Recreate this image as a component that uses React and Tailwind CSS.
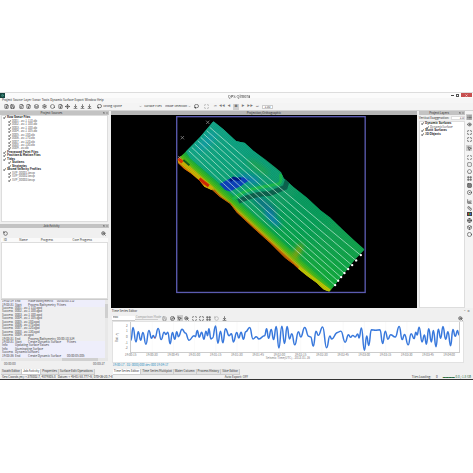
import {
  ArrowDownToLine, Box, ChartArea, Circle, CircleDot, Compass, Eye, FileDown, FileInput, FilePlus,
  Frame, Globe, Grid3x3, Hexagon, Layers, Lasso, List, Maximize, MousePointer2, Move,
  Pentagon, RotateCcw, Ruler, Save, Scan, Settings, Square, SquareDashed, ChevronDown, X, ZoomIn,
} from "lucide-react";

const menus = ["Project", "Source", "Layer", "Sonar", "Tools", "Dynamic Surface", "Export", "Window", "Help"];

const sources = [
  { name: "Raw Sonar Files", bold: true },
  { name: "0001 - av-1 110.db" },
  { name: "0002 - av-1 100.db" },
  { name: "0003 - av-1 100.db" },
  { name: "0004 - av-1 105.db" },
  { name: "0005 - av-180.db" },
  { name: "0006 - av-170.db" },
  { name: "0007 - av-120.db" },
  { name: "0008 - av-130.db" },
  { name: "0009 - av.db" },
  { name: "Processed Point Files", bold: true },
  { name: "Position & Motion Files", bold: true },
  { name: "Tides", bold: true },
  { name: "Stations", bold: true, sub: true },
  { name: "Strategies", bold: true, sub: true },
  { name: "Sound Velocity Profiles", bold: true },
  { name: "SVP_00001.bsvp" },
  { name: "SVP_00002.bsvp" },
  { name: "SVP_00003.bsvp" },
];

const log = [
  ["19:02:19", "End", "Make Bathymetric", "00:00:00.112", true],
  ["19:03:31", "Start", "Process Bathymetry", "9 lines", true],
  ["Success", "0001 - av-1 110.qpd"],
  ["Success", "0002 - av-1 100.qpd"],
  ["Success", "0003 - av-1 100.qpd"],
  ["Success", "0004 - av-1 105.qpd"],
  ["Success", "0005 - av-180.qpd"],
  ["Success", "0006 - av-170.qpd"],
  ["Success", "0007 - av-120.qpd"],
  ["Success", "0008 - av-130.qpd"],
  ["Success", "0009 - av.qpd"],
  ["19:03:31", "End", "Process Bathymetry", "00:00:10.524"],
  ["19:03:31", "Start", "Create Dynamic Surface", "9 lines", true],
  ["Info", "Updating Surface Values", "", "", true],
  ["Info", "Illuminating Surface", "", "", true],
  ["Success", "DynamicSurface1", "", "", true],
  ["19:03:36", "End", "Create Dynamic Surface", "00:00:05.005", true],
];

// turning points of the heave signal
const signal = [
  [72, 108], [78, 69], [87, 113], [94, 82], [101, 108], [108, 84], [117, 120], [126, 78], [134, 102], [139, 93],
  [144, 101], [154, 72], [163, 106], [172, 83], [177, 90], [183, 83], [190, 119], [197, 84], [204, 105],
  [210, 82], [215, 97], [226, 74], [236, 86], [247, 108], [262, 94], [266, 97], [272, 78], [278, 99],
  [285, 83], [292, 105], [298, 80], [303, 94], [307, 73], [313, 104], [318, 101], [327, 64], [334, 117],
  [342, 80], [349, 116], [357, 73], [368, 94], [375, 88], [381, 113], [391, 84], [397, 101], [404, 83],
  [411, 105], [418, 82], [430, 69], [440, 104], [450, 97], [458, 104], [475, 94], [481, 73], [487, 102],
  [495, 75], [502, 106], [510, 66], [518, 132], [527, 65], [535, 118], [543, 66], [550, 104], [557, 88],
  [566, 122], [577, 82], [584, 98], [596, 69], [608, 96], [614, 98], [622, 126], [630, 80], [637, 93],
  [650, 67], [662, 131], [672, 95], [677, 104], [695, 84], [705, 80], [718, 114], [728, 91], [734, 99],
  [741, 93], [748, 98], [756, 89], [760, 101], [767, 70], [776, 139], [783, 95], [789, 124], [797, 76],
  [810, 77], [823, 76], [831, 118], [839, 80], [847, 105], [855, 91], [869, 98], [881, 66], [890, 106],
  [897, 90], [908, 122], [917, 88], [926, 103], [931, 83], [935, 92], [941, 68], [950, 113], [957, 92],
  [963, 120], [970, 73], [978, 113], [984, 78], [992, 128], [999, 74], [1006, 102], [1013, 66],
  [1021, 105], [1028, 82], [1036, 125], [1043, 75], [1050, 96], [1057, 78], [1061, 92],
];

const signalPath = signal
  .map(([x, y], i) => {
    if (i === 0) return `M${x} ${y}`;
    const [px, py] = signal[i - 1];
    const mid = (px + x) / 2;
    return `C${mid} ${py} ${mid} ${y} ${x} ${y}`;
  })
  .join(" ");

const hours = ["19:00:15", "19:00:30", "19:00:45", "19:01:00", "19:01:15", "19:01:30", "19:01:45", "19:02:00",
  "19:02:15", "19:02:30", "19:02:45", "19:03:00", "19:03:15", "19:03:30", "19:03:45", "19:04:00"];

const trackEnds = [[571, 435], [557, 451], [545, 465], [533, 477], [522, 489], [512, 501], [503, 512], [494, 525]];

function DockTitle({ children }) {
  return (
    <div className="flex h-1 shrink-0 items-center bg-[#c3c3c3] pr-px">
      <h2 className="flex-1 text-center text-[#333]">{children}</h2>
      <button type="button" aria-label="Float" className="mr-px"><Square size={2} strokeWidth={3} /></button>
      <button type="button" aria-label="Close"><X size={2} strokeWidth={3} /></button>
    </div>
  );
}

function Tick({ label, bold, className = "" }) {
  return (
    <label className={`relative flex min-h-0 flex-1 items-center gap-px whitespace-nowrap ${bold ? "font-bold text-[#222]" : "text-[#555]"} ${className}`}>
      <input type="checkbox" defaultChecked className="sr-only" />
      <svg viewBox="0 0 8 8" className="size-[3px] shrink-0" fill="none" stroke="#111" strokeWidth="1.8">
        <path d="M1 4l2 3 4-6" />
      </svg>
      {label}
    </label>
  );
}

function Tool({ icon: Icon, label, active, className = "" }) {
  return (
    <button
      type="button"
      aria-label={label}
      className={`flex size-[6px] shrink-0 items-center justify-center text-[#444] ${active ? "bg-[#ccc]" : ""} ${className}`}
    >
      <Icon size={5} strokeWidth={3} />
    </button>
  );
}

function Tabs({ items, active }) {
  return (
    <div role="tablist" className="flex h-[6px] shrink-0 pl-px">
      {items.map((name) => (
        <button
          key={name}
          type="button"
          role="tab"
          aria-selected={name === active}
          className={`flex items-center border-r border-b border-[#ccc] px-px whitespace-nowrap ${name === active ? "bg-white" : "bg-[#e4e4e4]"}`}
        >
          {name}
        </button>
      ))}
    </div>
  );
}

function Bathymetry() {
  return (
    <svg viewBox="-177 15 918 579" className="block w-full" role="img" aria-label="Bathymetric surface">
      <defs>
        <linearGradient id="depth" gradientUnits="userSpaceOnUse" x1="240" y1="345" x2="349" y2="224">
          <stop offset="0" stopColor="#e06000" />
          <stop offset="0.04" stopColor="#c8b808" />
          <stop offset="0.09" stopColor="#58c412" />
          <stop offset="0.18" stopColor="#14b244" />
          <stop offset="0.6" stopColor="#0ea660" />
          <stop offset="1" stopColor="#12a06c" />
        </linearGradient>
        <linearGradient id="along" gradientUnits="userSpaceOnUse" x1="90" y1="80" x2="520" y2="470">
          <stop offset="0" stopColor="#14ae94" stopOpacity="0.9" />
          <stop offset="0.4" stopColor="#12a884" stopOpacity="0.7" />
          <stop offset="0.62" stopColor="#0ca458" stopOpacity="0.4" />
          <stop offset="1" stopColor="#12b430" stopOpacity="0.5" />
        </linearGradient>
        <pattern id="grain" width="5" height="5" patternUnits="userSpaceOnUse" patternTransform="rotate(41)">
          <path d="M0 0H5M0 0V5" stroke="#003c2c" strokeOpacity="0.36" strokeWidth="1.3" />
        </pattern>
        <filter id="soft" x="-50%" y="-50%" width="200%" height="200%"><feGaussianBlur stdDeviation="8" /></filter>
        <filter id="softer" x="-50%" y="-50%" width="200%" height="200%"><feGaussianBlur stdDeviation="2" /></filter>
        <clipPath id="swath">
          <path d="M130 34L160 58 198 93 211 96 224 98 250 122 285 148 318 174 333 187 341 205 370 231 410 262 452 301 480 322 515 356 550 389 583 418 552 451 478 545 460 538 440 519 410 497 385 477 368 461 345 444 300 399 250 354 200 307 180 281 150 261 128 241 103 230 88 211 62 190 43 177 25 160 22 148 40 132 60 112 90 81Z" />
        </clipPath>
      </defs>
      <rect x="-177" y="15" width="918" height="579" fill="#000" />
      <g clipPath="url(#swath)">
        <rect width="600" height="570" fill="url(#depth)" />
        <path d="M130 20L600 418 500 545 395 450 205 270 130 205 60 145 45 120Z" fill="url(#along)" filter="url(#softer)" />
        <g filter="url(#soft)">
          <ellipse cx="110" cy="95" rx="40" ry="14" fill="#16a0b8" fillOpacity="0.7" transform="rotate(-45 110 95)" />
          <ellipse cx="236" cy="206" rx="36" ry="12" fill="#0a86b8" transform="rotate(14 236 206)" />
          <ellipse cx="285" cy="285" rx="45" ry="14" fill="#0c7c8c" transform="rotate(38 285 285)" />
          <ellipse cx="306" cy="325" rx="34" ry="10" fill="#0c80c0" transform="rotate(48 306 325)" />
          <ellipse cx="265" cy="172" rx="40" ry="11" fill="#26ac4c" fillOpacity="0.8" transform="rotate(35 265 172)" />
          <ellipse cx="382" cy="425" rx="26" ry="8" fill="#b0a800" transform="rotate(-60 382 425)" />
        </g>
        <g fill="none" filter="url(#softer)">
          <path d="M148 222L178 206 222 202 238 210 215 226 180 244 165 240Z" fill="#0c40c4" />
          <path d="M180 212l10-8 14 4 8-3" stroke="#00188c" strokeWidth="9" />
          <path d="M205 274Q250 250 300 250L345 232 352 210" stroke="#0a6450" strokeWidth="15" />
          <path d="M188 268Q220 240 262 234 300 226 326 222 336 212 331 192" stroke="#1cc050" strokeWidth="9" />
          <path d="M22 150L60 184 96 216 124 240" stroke="#d8b800" strokeWidth="20" />
          <path d="M22 158L60 190 100 226" stroke="#ec7000" strokeWidth="6" />
          <path d="M88 206l28 22" stroke="#e02400" strokeWidth="9" />
          <path d="M25 145l12 12" stroke="#f03000" strokeWidth="10" />
          <path d="M40 150l18 16" stroke="#186018" strokeWidth="6" />
          <path d="M385 474L478 543" stroke="#c8cc00" strokeWidth="12" />
        </g>
        <path d="M130 240L150 261 180 281 200 307 250 354 300 399 368 461" fill="none" stroke="#c86000" strokeWidth="6" />
        <rect width="600" height="570" fill="url(#grain)" />
        <g fill="none" stroke="#c4ecd8" strokeWidth="2.4" strokeOpacity="0.85">
          {trackEnds.map(([x, y], i) => {
            const sx = 119 - i * 9;
            const sy = 52 + i * 10;
            return <path key={x} d={`M${sx} ${sy}Q${(sx + x) / 2 - 12} ${(sy + y) / 2 - 4} ${x} ${y}`} />;
          })}
        </g>
      </g>
      <g fill="#fff">
        {trackEnds.map(([x, y]) => <circle key={x} cx={x + 1} cy={y} r="3.5" />)}
      </g>
      <path d="M108 32l10 10m0-10l-10 10M32 78l10 10m0-10l-10 10M24 138l8 8m0-8l-8 8" stroke="#aaa" strokeWidth="1.8" />
      <rect x="20" y="20" width="565" height="527" fill="none" stroke="#5b5bb0" strokeWidth="4" />
    </svg>
  );
}

function LeftColumn() {
  return (
    <div className="flex w-[23%] min-w-[108px] shrink-0 flex-col overflow-hidden">
      <DockTitle>Project Sources</DockTitle>
      <div className="mx-px h-[107px] border border-[#ddd] bg-white">
        <div className="flex h-[66px] flex-col pl-px">
          {sources.map((s) => (
            <Tick key={s.name} label={s.name} bold={s.bold} className={s.bold && !s.sub ? "" : "pl-[5px]"} />
          ))}
        </div>
      </div>
      <div className="h-[2px]" />
      <DockTitle>Job Activity</DockTitle>
      <div className="flex h-[10px] items-center justify-between px-[2px]">
        <Tool icon={RotateCcw} label="Restart job" />
        <Tool icon={ZoomIn} label="Find" />
      </div>
      <table className="mx-px h-1 table-fixed bg-[#fafafa]">
        <thead>
          <tr className="text-center">
            <th className="w-[8%] p-0 font-normal">ID</th>
            <th className="w-[26%] p-0 font-normal">Name</th>
            <th className="w-[18%] p-0 font-normal">Progress</th>
            <th className="p-0 font-normal">Core Progress</th>
          </tr>
        </thead>
      </table>
      <div className="mx-px h-[57px] border border-[#ddd] bg-white" />
      <div className="mx-px flex h-[59px] border-t border-[#ccc] bg-[#efeff0]">
        <div className="flex flex-1 flex-col overflow-hidden">
          {log.map(([time, what, job = "", value = "", tint], i) => (
            <div key={i} className={`flex min-h-0 flex-1 items-center pl-px whitespace-nowrap text-[#444] ${tint ? "bg-[#eeeefb]" : ""}`}>
              <span className="w-[13px]">{time}</span>
              <span className="w-[13px]">{what}</span>
              <span className={job.length > 20 ? "w-[39px]" : "w-[29px]"}>{job}</span>
              <span>{value}</span>
            </div>
          ))}
        </div>
        <div className="w-[3px] bg-[#e8e8e8]"><div className="mt-[4px] h-[14px] bg-[#cfcfcf]" /></div>
      </div>
      <div className="mx-px flex h-[3px] bg-[#e6e6e6] pl-[61px]"><div className="w-[36px] bg-[#d0d0d0]" /></div>
      <div className="flex h-[5px] items-end justify-between px-[4px] text-[#555]">
        <span>00:00:00</span>
        <span>00:00:27</span>
      </div>
      <div className="min-h-[2px] flex-1" />
      <Tabs items={["Swath Editor", "Job Activity", "Properties", "Surface Edit Operations"]} active="Job Activity" />
    </div>
  );
}

function TimeSeries() {
  return (
    <section className="flex flex-col pl-px">
      <div className="flex h-[7px] items-center justify-between">
        <h2>Time Series Editor</h2>
        <span className="pr-[3px]">▫ ×</span>
      </div>
      <div className="flex h-[6px] items-center pr-[10px]">
        <select aria-label="Series" className="h-[5px] w-[23px] appearance-none border-b border-[#ccc] bg-white pl-px">
          <option>Roll</option>
        </select>
        <span className="w-[23px] border-b border-[#ccc] pl-px whitespace-nowrap text-[#999]">Comparison Mode</span>
        <div className="flex flex-1 gap-px pl-[4px]">
          <Tool icon={Save} label="Save" className="mr-px opacity-50" />
          <Tool icon={Compass} label="Centre" />
          <Tool icon={MousePointer2} label="Select" active />
          <Tool icon={ZoomIn} label="Zoom" />
          <Tool icon={Scan} label="Fit" className="ml-px" />
          <Tool icon={Maximize} label="Fit width" />
          <Tool icon={Frame} label="Fit height" />
          <Tool icon={RotateCcw} label="Undo" className="ml-px opacity-40" />
          <Tool icon={ArrowDownToLine} label="Export" className="ml-px" />
        </div>
        <Tool icon={ZoomIn} label="Find" />
      </div>
      <div className="mr-[9px] border border-[#e2e2e2] bg-white pb-px">
        <div className="flex h-[31px]">
          <div className="flex w-[17px] items-center justify-between pr-[2px] text-[#666]">
            <span className="-rotate-90 whitespace-nowrap">Roll (°)</span>
            <ol className="flex h-full flex-col justify-evenly text-right">
              <li>2</li><li>1</li><li>0</li><li>-1</li><li>-2</li>
            </ol>
          </div>
          <div className="mr-[3px] min-w-0 flex-1 border border-t-0 border-[#ccc]">
            <svg viewBox="72 52 990 92" preserveAspectRatio="none" className="block size-full">
              {hours.map((h, i) => <path key={h} d={`M${72 + i * 64} 52V144`} stroke="#f0f0f0" />)}
              <path d={signalPath} fill="none" stroke="#3878dc" strokeWidth="4.5" />
              <path d="M142 98l3 4" stroke="#d04040" strokeWidth="3" />
            </svg>
          </div>
        </div>
        <div className="flex h-[4px] items-center justify-between pr-[8px] pl-[12px] text-[#777]">
          {hours.map((h) => <span key={h}>{h}</span>)}
        </div>
        <p className="h-[4px] text-center text-[#777]">Seismic Time(UTC) - 2013-01-16</p>
      </div>
      <p className="flex h-[5px] items-center"><a href="#start" className="pl-px text-[#2a8fc0]">19:00:17 - 02: 0000/000 dev 000 19:04:17</a></p>
      <div className="pt-px">
        <Tabs items={["Time Series Editor", "Time Series Multiplot", "Water Column", "Process History", "Slice Editor"]} active="Time Series Editor" />
      </div>
    </section>
  );
}

export default function App() {
  return (
    <main
      className="min-h-screen bg-white pt-[92px] text-[3px] leading-[3px] text-[#333]"
      style={{ fontFamily: '"Noto Sans CJK JP", "Liberation Sans", sans-serif' }}
    >
      <div className="flex flex-col border-t border-[#ddd] bg-[#f0f0f0]">
        {/* Title bar */}
        <header className="relative flex h-[5px] items-center justify-between bg-[#fbfbfb]">
          <div className="flex size-[5px] items-center justify-center bg-[#17453f] text-[#5fc0a8]"><Globe size={3} /></div>
          <h1 className="text-[4px] leading-[4px]">QPS Qimera</h1>
          <div className="absolute top-0 right-px flex h-[4px] items-center gap-[2px]">
            <button type="button" aria-label="Minimize" className="h-px w-[3px] bg-[#444]" />
            <button type="button" aria-label="Restore" className="size-[3px] border border-[#555]" />
            <button type="button" aria-label="Close" className="flex h-[4px] w-[11px] items-center justify-center bg-[#c75050] text-white">
              <X size={3} strokeWidth={4} />
            </button>
          </div>
          <span />
        </header>

        {/* Menu */}
        <nav className="flex h-[5px] items-center gap-px bg-[#f6f6f6] pl-[2px]">
          {menus.map((m) => <button key={m} type="button">{m}</button>)}
        </nav>

        {/* Toolbar */}
        <div className="flex h-[7px] items-center bg-[#f4f4f4] pl-[3px]">
          <Tool icon={FilePlus} label="New project" />
          <Tool icon={Save} label="Save project" />
          <Tool icon={FileInput} label="Add raw files" className="ml-[3px]" />
          <Tool icon={FileDown} label="Add processed files" className="ml-px" />
          <Tool icon={Layers} label="Add layer" className="ml-[2px]" />
          <Tool icon={Settings} label="Settings" className="ml-[2px]" />
          <Tool icon={Hexagon} label="Process" className="ml-[2px]" />
          <Tool icon={FileDown} label="Import" className="ml-[2px]" />
          <Tool icon={Move} label="Shift" className="ml-px" />
          <Tool icon={ArrowDownToLine} label="Tide" className="ml-[2px]" />
          <Tool icon={ArrowDownToLine} label="Velocity" className="ml-px" />
          <Tool icon={ArrowDownToLine} label="Merge" className="ml-px" />
          <Tool icon={Lasso} label="Spline" className="ml-[4px]" />
          <select aria-label="Filter" className="ml-px h-[5px] w-[36px] appearance-none">
            <option>Strong Spline</option>
          </select>
          <ChevronDown size={3} />
          <select aria-label="Target" className="ml-[2px] h-[5px] w-[21px] appearance-none">
            <option>Surface Files</option>
          </select>
          <select aria-label="Scope" className="h-[5px] w-[23px] appearance-none">
            <option>Inside Selection</option>
          </select>
          <ChevronDown size={3} />
          <Tool icon={Lasso} label="Apply filter" className="ml-[2px]" />
          <Tool icon={Scan} label="Follow" className="ml-[4px] opacity-50" />
          <div className="ml-[3px] flex gap-px text-[#777]">
            {["⏮", "◀◀", "◀", "■", "▶", "▶▶", "⏭"].map((s) => (
              <button key={s} type="button" className={`flex size-[6px] items-center justify-center ${s === "■" ? "bg-[#cfcfcf]" : ""}`}>{s}</button>
            ))}
          </div>
          <input aria-label="Speed" defaultValue="1.00" className="ml-[2px] h-[4px] w-[11px] border border-[#ccc] bg-white text-center" />
        </div>

        {/* Panels */}
        <div className="flex border-t border-[#d4d4d4]">
          <LeftColumn />
          <div className="flex min-w-0 flex-1 flex-col pl-[2px]">
            <div className="flex">
              <div className="min-w-0 flex-1 bg-black">
                <h2 className="h-1 bg-[#b5b5b5] text-center leading-[4px]">Projection/Orthographic</h2>
                <Bathymetry />
              </div>
              <aside className="flex w-[48px] flex-col pl-[2px]">
                <DockTitle>Project Layers</DockTitle>
                <label className="flex h-[6px] items-center justify-between whitespace-nowrap">
                  Vertical Exaggeration:
                  <input defaultValue="1.0" className="h-[4px] w-[14px] border border-[#ddd] bg-white text-right" />
                </label>
                <div className="flex-1 border border-[#ddd] bg-white">
                  <div className="flex h-[14px] flex-col pl-px">
                    <Tick label="Dynamic Surfaces" bold />
                    <Tick label="DynamicSurface" className="pl-[5px]" />
                    <Tick label="Static Surfaces" bold />
                    <Tick label="3D Objects" bold />
                  </div>
                </div>
              </aside>
              <div className="flex w-[8px] flex-col items-center gap-px bg-[#f4f4f4] pt-[3px]">
                <Tool icon={List} label="List" active />
                <Tool icon={Eye} label="View" />
                <Tool icon={Maximize} label="Zoom extents" className="mt-px" />
                <Tool icon={Maximize} label="Zoom selection" />
                <Tool icon={MousePointer2} label="Pick" active className="mt-[2px]" />
                <Tool icon={Scan} label="Select box" className="mt-[2px]" />
                <Tool icon={SquareDashed} label="Select rectangle" />
                <Tool icon={Pentagon} label="Select polygon" />
                <Tool icon={Frame} label="Select frame" />
                <Tool icon={Grid3x3} label="Grid" />
                <Tool icon={CircleDot} label="Point" />
                <Tool icon={ChartArea} label="Profile" className="mt-[2px]" />
                <Tool icon={Ruler} label="Measure" />
                <button type="button" aria-label="Colour map" className="flex h-[4px] w-[5px] border border-[#444]">
                  <i className="flex-1 bg-[#c33]" /><i className="flex-1 bg-[#3a3]" /><i className="flex-1 bg-[#36c]" />
                </button>
                <Tool icon={Globe} label="Globe" />
                <Tool icon={Box} label="Box" />
                <Tool icon={Circle} label="Sphere" />
              </div>
            </div>
            <TimeSeries />
          </div>
        </div>

        {/* Status bar */}
        <footer className="flex h-[5px] items-center justify-between border-b border-[#333] px-[2px] whitespace-nowrap">
          <span className="flex-1">Geo Coords (m): + 378002.7, 4879805.8 &nbsp; Datum: + 45°01'58.777"N, 070°36'20.7"E</span>
          <span>Auto Export: OFF</span>
          <span className="flex flex-1 items-center justify-end gap-[5px]">
            <span>Tiles Loading:</span><span>0</span>
            <span className="flex items-center text-[#2b6b3f]">▬▬▬▬ 0.0 / 1.8 GB</span>
          </span>
        </footer>
      </div>
    </main>
  );
}
